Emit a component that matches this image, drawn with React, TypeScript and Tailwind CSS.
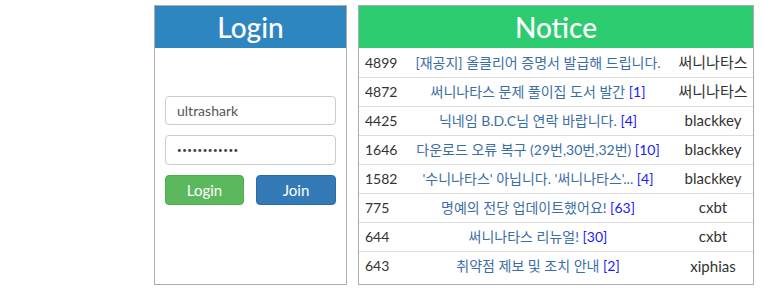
import React from "react";

const notices = [
  { id: 4899, title: "[재공지] 올클리어 증명서 발급해 드립니다.", count: null, author: "써니나타스" },
  { id: 4872, title: "써니나타스 문제 풀이집 도서 발간", count: 1, author: "써니나타스" },
  { id: 4425, title: "닉네임 B.D.C님 연락 바랍니다.", count: 4, author: "blackkey" },
  { id: 1646, title: "다운로드 오류 복구 (29번,30번,32번)", count: 10, author: "blackkey" },
  { id: 1582, title: "'수니나타스' 아닙니다. '써니나타스'...", count: 4, author: "blackkey" },
  { id: 775, title: "명예의 전당 업데이트했어요!", count: 63, author: "cxbt" },
  { id: 644, title: "써니나타스 리뉴얼!", count: 30, author: "cxbt" },
  { id: 643, title: "취약점 제보 및 조치 안내", count: 2, author: "xiphias" },
];

export default function App() {
  return (
    <div
      className="flex items-start gap-[11px] bg-white pl-[154px] pt-[5px] text-[14px] text-[#333]"
      style={{ fontFamily: 'Lato, "Noto Sans CJK KR", sans-serif' }}
    >
      {/* Login box */}
      <div className="flex h-[280px] w-[193px] flex-col border border-[#adadad]">
        <div className="flex h-[42px] items-center justify-center bg-[#2e86c1] text-[28px] font-medium text-white">
          Login
        </div>
        <div className="flex flex-col gap-[10px] pl-[10px] pr-[10px] pt-[48px]">
          <input
            className="h-[29px] w-[171px] rounded-[4px] border border-[#ccc] px-[11px] text-[14px] text-[#555] outline-none"
            defaultValue="ultrashark"
          />
          <input
            type="password"
            className="h-[30px] w-[171px] rounded-[4px] border border-[#ccc] px-[11px] text-[8px] tracking-[0.5px] text-[#444] outline-none"
            defaultValue="ultrashark12"
          />
          <div className="flex gap-[12px]">
            <button className="h-[30px] w-[79px] rounded-[4px] border border-[#4cae4c] bg-[#5cb85c] text-[15px] text-white">
              Login
            </button>
            <button className="h-[30px] w-[80px] rounded-[4px] border border-[#2e6da4] bg-[#337ab7] text-[15px] text-white">
              Join
            </button>
          </div>
        </div>
      </div>

      {/* Notice board */}
      <div className="h-[280px] w-[396px] border border-[#adadad]">
        <div className="flex h-[42px] items-center justify-center bg-[#2ecc71] text-[28px] font-medium text-white">
          Notice
        </div>
        <table className="w-full table-fixed border-collapse">
          <colgroup>
            <col className="w-[44px]" />
            <col />
            <col className="w-[80px]" />
          </colgroup>
          <tbody>
            {notices.map((n) => (
              <tr key={n.id} className="h-[29px] border-b border-[#ddd] last:border-b-0">
                <td className="pl-[6px] text-[14px] text-[#333]">{n.id}</td>
                <td className="truncate text-center text-[#3a6ea5]">
                  {n.title}
                  {n.count !== null && <span className="text-[#1a1aff]"> [{n.count}]</span>}
                </td>
                <td className="text-center text-[15px] text-[#333]">{n.author}</td>
              </tr>
            ))}
          </tbody>
        </table>
      </div>
    </div>
  );
}
